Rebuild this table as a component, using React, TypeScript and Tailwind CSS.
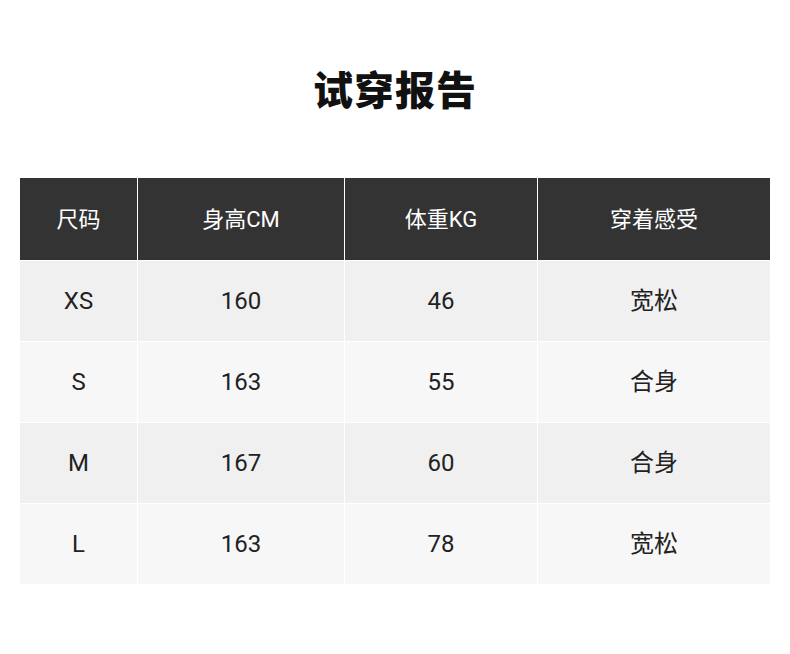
import React from "react";

const font = { fontFamily: '"Roboto", "Noto Sans CJK SC", sans-serif' };

const rows = [
  ["XS", "160", "46", "宽松"],
  ["S", "163", "55", "合身"],
  ["M", "167", "60", "合身"],
  ["L", "163", "78", "宽松"],
];

const headers = ["尺码", "身高CM", "体重KG", "穿着感受"];

export default function App() {
  return (
    <div className="w-[790px] h-[654px] bg-white" style={font}>
      <div className="pt-[64px] h-[112px] flex justify-center">
        <h1
          className="text-[40px] leading-[48px] font-black text-[#111] tracking-[1px]"
          style={{ fontFamily: '"Noto Sans CJK SC", sans-serif' }}
        >
          试穿报告
        </h1>
      </div>
      <div className="mt-[66px] mx-[20px] grid grid-cols-[117px_206px_192px_232px] gap-px bg-white">
        {headers.map((h) => (
          <div
            key={h}
            className="h-[82px] bg-[#333333] text-white text-[22px] flex items-center justify-center font-normal"
          >
            {h}
          </div>
        ))}
        {rows.map((r, i) =>
          r.map((c, j) => (
            <div
              key={`${i}-${j}`}
              className={`h-[80px] flex items-center justify-center text-[24px] text-[#222] ${
                i % 2 === 0 ? "bg-[#f0f0f0]" : "bg-[#f7f7f7]"
              }`}
            >
              {c}
            </div>
          ))
        )}
      </div>
    </div>
  );
}
